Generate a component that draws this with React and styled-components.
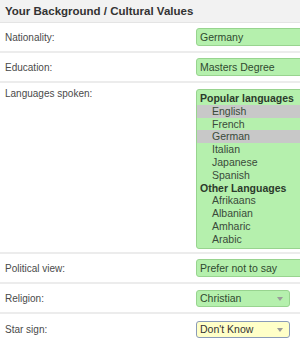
import React from "react";
import styled, { createGlobalStyle } from "styled-components";

const GlobalStyle = createGlobalStyle`
  html, body {
    margin: 0;
    padding: 0;
    background: #ffffff;
    overflow: hidden;
  }
  body {
    font-family: "Liberation Sans", Arial, sans-serif;
  }
`;

const popular = ["English", "French", "German", "Italian", "Japanese", "Spanish"];
const other = ["Afrikaans", "Albanian", "Amharic", "Arabic"];
const picked = ["English", "German"];

export default function App() {
  return (
    <Panel>
      <GlobalStyle />
      <Header>Your Background / Cultural Values</Header>
      <Row>
        <Label>Nationality:</Label>
        <TextBox>Germany</TextBox>
      </Row>
      <Row>
        <Label>Education:</Label>
        <TextBox>Masters Degree</TextBox>
      </Row>
      <Row tall>
        <Label>Languages spoken:</Label>
        <ListBox>
          <Group>Popular languages</Group>
          {popular.map((l) => (
            <Option key={l} selected={picked.includes(l)}>
              {l}
            </Option>
          ))}
          <Group>Other Languages</Group>
          {other.map((l) => (
            <Option key={l}>{l}</Option>
          ))}
        </ListBox>
      </Row>
      <Row>
        <Label>Political view:</Label>
        <TextBox>Prefer not to say</TextBox>
      </Row>
      <Row>
        <Label>Religion:</Label>
        <Select>
          Christian
          <Caret />
        </Select>
      </Row>
      <Row last>
        <Label>Star sign:</Label>
        <Select focused>
          Don't Know
          <Caret />
        </Select>
      </Row>
    </Panel>
  );
}

const Panel = styled.div`
  width: 300px;
  height: 341px;
  overflow: hidden;
  color: #444;
`;

const Header = styled.div`
  height: 23px;
  box-sizing: border-box;
  padding: 5px 5px 0;
  background: #f2f2f2;
  border-bottom: 1px solid #e4e4e4;
  font-size: 11.5px;
  font-weight: bold;
  color: #333;
`;

const Row = styled.div`
  display: flex;
  align-items: ${(p) => (p.tall ? "flex-start" : "center")};
  box-sizing: border-box;
  height: ${(p) => (p.tall ? "171px" : "30px")};
  padding: ${(p) => (p.tall ? "5px 0 0 5px" : "0 0 0 5px")};
  border-bottom: ${(p) => (p.last ? "none" : "2px solid #ececec")};
`;

const Label = styled.div`
  width: 191px;
  flex-shrink: 0;
  font-size: 10px;
  color: #4a4a4a;
`;

const TextBox = styled.div`
  flex-shrink: 0;
  width: 120px;
  height: 18px;
  box-sizing: border-box;
  padding: 2px 3px 0;
  background: #b5f0ad;
  border: 1px solid #98d48f;
  border-radius: 3px;
  font-size: 10.5px;
  color: #2f4a2f;
  white-space: nowrap;
`;

const ListBox = styled.div`
  flex-shrink: 0;
  width: 120px;
  height: 160px;
  box-sizing: border-box;
  margin-top: 1px;
  padding: 2px 0 0;
  background: #b5f0ad;
  border: 1px solid #98d48f;
  border-radius: 3px;
  font-size: 10.5px;
  overflow: hidden;
`;

const Group = styled.div`
  height: 12.8px;
  line-height: 12.8px;
  padding-left: 3px;
  font-weight: bold;
  color: #2b3a2b;
`;

const Option = styled.div`
  height: 12.8px;
  line-height: 12.8px;
  padding-left: 15px;
  color: #3a4a3a;
  background: ${(p) => (p.selected ? "#c8c8c8" : "transparent")};
`;

const Select = styled.div`
  position: relative;
  flex-shrink: 0;
  width: 94px;
  height: 17px;
  box-sizing: border-box;
  padding: 1px 3px 0;
  background: ${(p) => (p.focused ? "#ffffc8" : "#b5f0ad")};
  border: 1px solid ${(p) => (p.focused ? "#8a9bb8" : "#98d48f")};
  border-radius: 3px;
  font-size: 10.5px;
  color: ${(p) => (p.focused ? "#333" : "#2f4a2f")};
`;

const Caret = styled.span`
  position: absolute;
  right: 6px;
  top: 6px;
  width: 0;
  height: 0;
  border-left: 3.5px solid transparent;
  border-right: 3.5px solid transparent;
  border-top: 4px solid #9a9a9a;
`;
